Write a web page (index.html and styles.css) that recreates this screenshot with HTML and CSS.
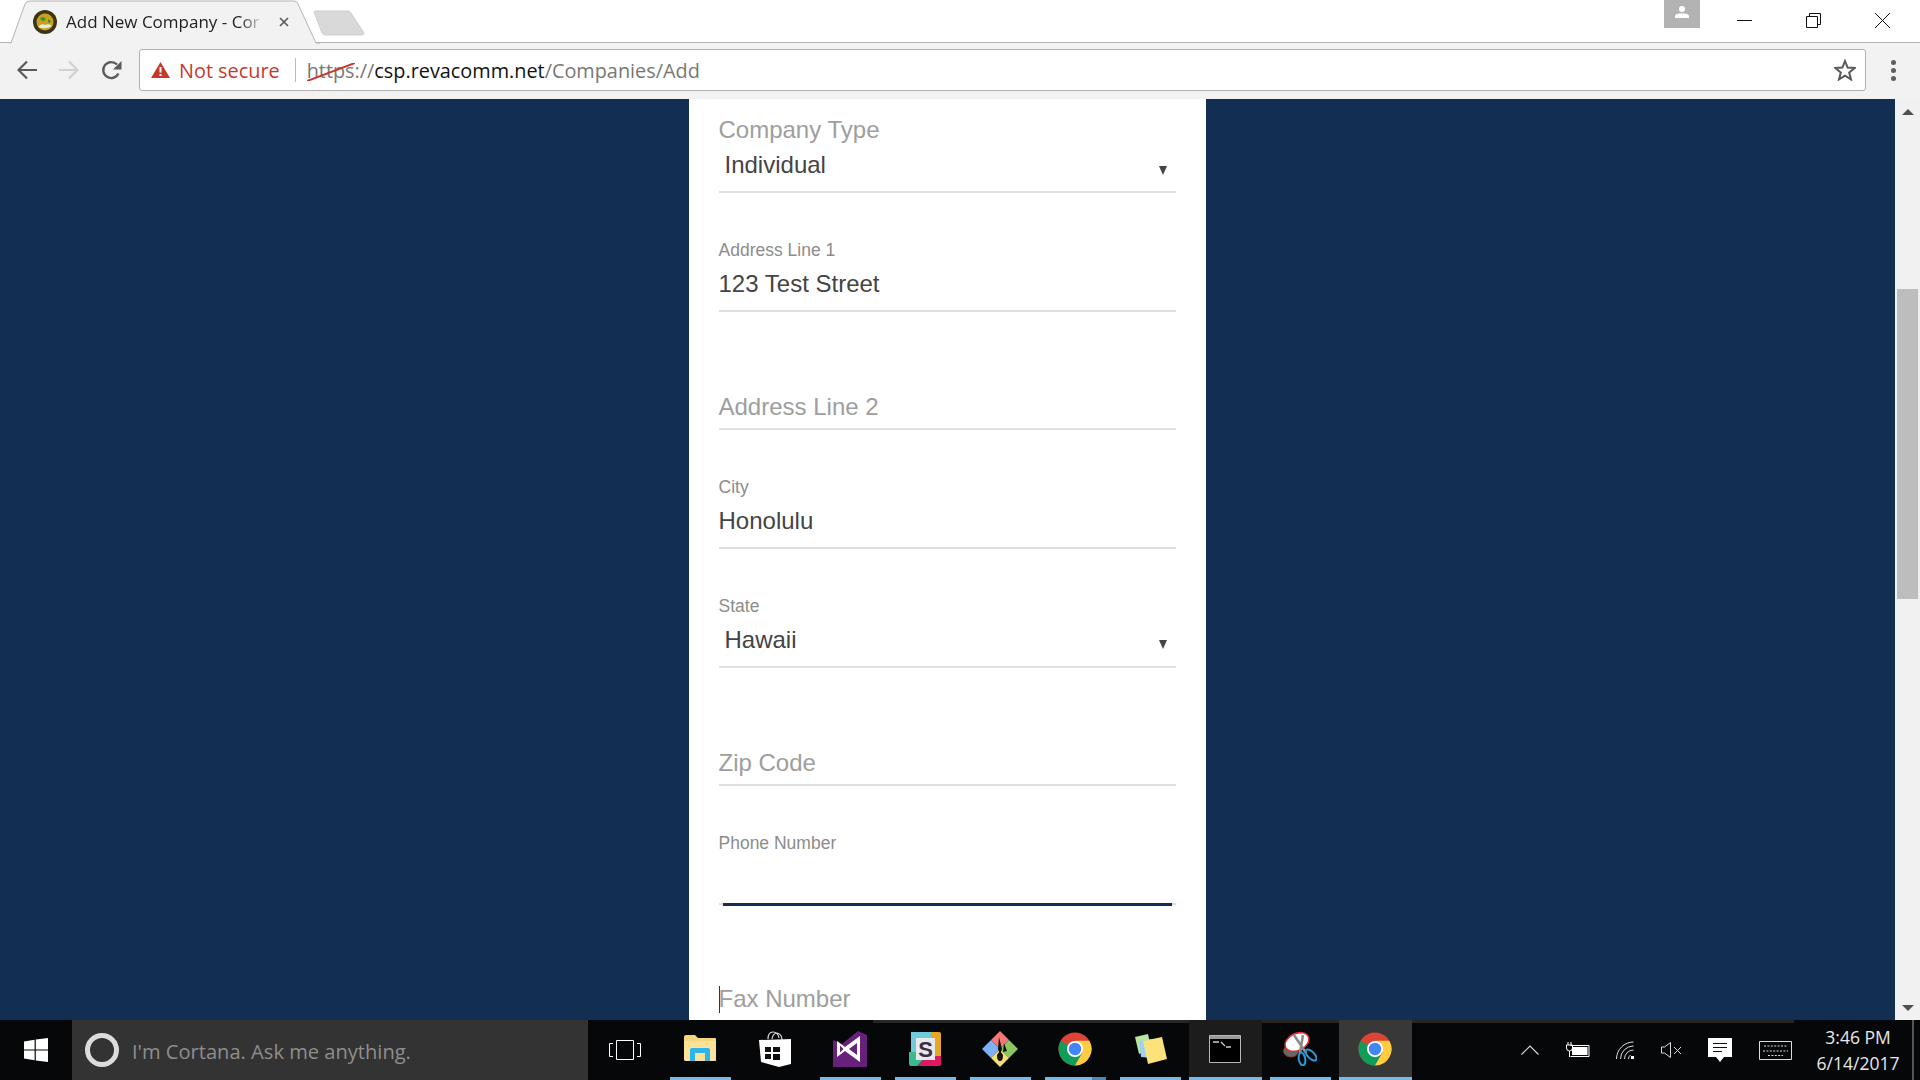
FILE: index.html
```html
<!DOCTYPE html>
<html lang="en">
  <head>
    <meta charset="UTF-8" />
    <title>Add New Company</title>
    <link rel="stylesheet" href="styles.css">
  </head>
  <body>
    <svg class="defs" width="0" height="0">
      <symbol id="chrome" viewBox="0 0 34 34">
        <circle cx="17" cy="17" r="16.5" fill="#db4437" />
        <path d="M2.6 9 A16.5 16.5 0 0 0 17 33.5 L24.5 20.5 H17 L9.5 13z" fill="#0f9d58" />
        <path d="M17 33.5 A16.5 16.5 0 0 0 31.3 8.7 H17 L24.5 20.5z" fill="#ffcd40" />
        <circle cx="17" cy="17" r="8" fill="#fff" />
        <circle cx="17" cy="17" r="6.2" fill="#4285f4" />
      </symbol>
    </svg>

    <!-- Tab strip -->
    <div class="tabstrip">
      <div class="tab">
        <svg class="tab-shape" width="310" height="44" viewBox="0 0 310 44">
          <path d="M0 43 H1 L15 4 Q16 1 20 1 H284 Q287 1 288 4 L306 43 H310" fill="#f2f2f2" stroke="#b4b4b4" />
        </svg>
        <svg class="favicon" width="24" height="24" viewBox="0 0 24 24">
          <circle cx="12" cy="12" r="12" fill="#3d3418" />
          <circle cx="12" cy="12" r="8.5" fill="#c9a21c" />
          <path d="M7 8 L11 7 L13 10 L9 11z M15 9 l3 2 -1 2 -2-1z" fill="#3f8c3a" />
          <path d="M5 17 q3-4 7-2 q4-2 7 1 q-6 4-14 1z" fill="#e8e8e8" />
        </svg>
        <span class="tab-title">Add New Company - Cor</span>
        <svg class="tab-close" width="10" height="10" viewBox="0 0 10 10">
          <path d="M1 1 L9 9 M9 1 L1 9" stroke="#5a5a5a" stroke-width="1.7" />
        </svg>
      </div>
      <svg class="newtab" width="52" height="26" viewBox="0 0 52 26">
        <path d="M1 2 Q1 1 3 1 H35 Q37 1 38 3 L51 23 Q51 25 49 25 H12 Q10 25 9 23z" fill="#d9d9d9" stroke="#cfcfcf" />
      </svg>
      <div class="spacer"></div>
      <div class="profile">
        <svg width="14" height="14" viewBox="0 0 14 14">
          <circle cx="7" cy="4" r="3" fill="#fff" />
          <path d="M0 13 V11 Q0 9 4 8.4 H10 Q14 9 14 11 V13z" fill="#fff" />
        </svg>
      </div>
      <div class="winbtn">
        <svg width="15" height="15" viewBox="0 0 15 15"><path d="M0 7.5 H15" stroke="#111" /></svg>
      </div>
      <div class="winbtn">
        <svg width="15" height="15" viewBox="0 0 15 15">
          <path d="M3.5 3 V.5 H14.5 V11.5 H12 M.5 3.5 H11.5 V14.5 H.5z" fill="none" stroke="#111" />
        </svg>
      </div>
      <div class="winbtn">
        <svg width="15" height="15" viewBox="0 0 15 15"><path d="M0 0 L15 15 M15 0 L0 15" stroke="#111" /></svg>
      </div>
    </div>

    <!-- Toolbar -->
    <div class="toolbar">
      <svg class="navicon" width="20" height="20" viewBox="0 0 20 20">
        <path d="M20 10 H2 M10 1.5 L1.5 10 L10 18.5" fill="none" stroke="#5a5a5a" stroke-width="2.2" />
      </svg>
      <svg class="navicon" width="20" height="20" viewBox="0 0 20 20">
        <path d="M0 10 H18 M10 1.5 L18.5 10 L10 18.5" fill="none" stroke="#d2d2d2" stroke-width="2.2" />
      </svg>
      <svg class="navicon" width="21" height="21" viewBox="0 0 21 21">
        <path d="M17.5 13.5 A8 8 0 1 1 16 4.5" fill="none" stroke="#5a5a5a" stroke-width="2.4" />
        <path d="M20.5 1 V9.5 H12z" fill="#5a5a5a" />
      </svg>
      <div class="omnibox">
        <svg class="warn" width="19" height="16" viewBox="0 0 19 16">
          <path d="M9.5 0 L19 16 H0z" fill="#c5392d" />
          <path d="M8.5 5 H10.5 V10.5 H8.5z M8.5 12 H10.5 V14 H8.5z" fill="#fff" />
        </svg>
        <span class="not-secure">Not secure</span>
        <span class="omni-divider"></span>
        <span class="url">
          <span class="scheme">https<svg class="strike" width="48" height="18" viewBox="0 0 48 18"><path d="M0 18 L48 0" stroke="#c5392d" stroke-width="2" /></svg></span><span class="url-dim">://</span>csp.revacomm.net<span class="url-dim">/Companies/Add</span>
        </span>
        <div class="spacer"></div>
        <svg class="star" width="22" height="22" viewBox="0 0 22 22">
          <path d="M11 2 L13.6 8.6 L20.6 9 L15.2 13.5 L17 20.4 L11 16.6 L5 20.4 L6.8 13.5 L1.4 9 L8.4 8.6z" fill="none" stroke="#5a5a5a" stroke-width="2" />
        </svg>
      </div>
      <div class="menu-dots"><i></i><i></i><i></i></div>
    </div>

    <!-- Page -->
    <div class="viewport">
      <div class="page">
        <form class="card">
          <div class="field field-first">
            <span class="label-big">Company Type</span>
            <div class="value select">Individual<span class="arrow"></span></div>
          </div>
          <div class="field">
            <span class="label">Address Line 1</span>
            <div class="value">123 Test Street</div>
          </div>
          <div class="field">
            <div class="value placeholder">Address Line 2</div>
          </div>
          <div class="field">
            <span class="label">City</span>
            <div class="value">Honolulu</div>
          </div>
          <div class="field">
            <span class="label">State</span>
            <div class="value select">Hawaii<span class="arrow"></span></div>
          </div>
          <div class="field">
            <div class="value placeholder">Zip Code</div>
          </div>
          <div class="field field-focus">
            <span class="label">Phone Number</span>
            <div class="value">&nbsp;</div>
          </div>
          <div class="field">
            <div class="value placeholder fax"><span class="caret"></span>Fax Number</div>
          </div>
        </form>
      </div>
      <div class="scrollbar">
        <div class="scroll-btn"><span class="scroll-up"></span></div>
        <div class="scroll-track"><div class="scroll-thumb"></div></div>
        <div class="scroll-btn"><span class="scroll-down"></span></div>
      </div>
    </div>

    <!-- Taskbar -->
    <div class="taskbar">
      <div class="start">
        <svg width="24" height="24" viewBox="0 0 24 24">
          <path d="M0 3.4 L10.6 1.8 V11.4 H0z M11.8 1.6 L24 0 V11.4 H11.8z M0 12.6 H10.6 V22.2 L0 20.6z M11.8 12.6 H24 V24 L11.8 22.4z" fill="#fff" />
        </svg>
      </div>
      <div class="cortana">
        <span class="cortana-ring"></span>
        <span class="cortana-text">I'm Cortana. Ask me anything.</span>
      </div>
      <div class="taskview">
        <svg width="32" height="20" viewBox="0 0 32 20">
          <path d="M7.5 .5 H24.5 V19.5 H7.5z M4 3.5 H.5 V16.5 H4 M28 3.5 H31.5 V16.5 H28" fill="none" stroke="#fff" />
        </svg>
      </div>
      <div class="tasks">
        <div class="task task-open">
          <svg width="32" height="28" viewBox="0 0 32 28">
            <path d="M0 2 Q0 0 2 0 H11 L14 3 H31 Q32 3 32 4 V25 Q32 26 30 26 H2 Q0 26 0 24z" fill="#f6d67a" />
            <path d="M0 6 H32 V25 Q32 26 30 26 H2 Q0 26 0 24z" fill="#fbe29a" />
            <path d="M6 26 V15 Q6 13 8 13 H24 Q26 13 26 15 V26 H21 V18 H11 V26z" fill="#2fb4e9" />
          </svg>
        </div>
        <div class="task">
          <svg width="32" height="36" viewBox="0 0 32 36">
            <path d="M9 8 Q9 1 14 1 Q19 1 20 7 M13 8 Q14 2 18 2 Q23 3 23 9" fill="none" stroke="#ddd" stroke-width="1.2" />
            <path d="M0 9 L32 8 V33 L20 36 L2 31z" fill="#fff" />
            <path d="M6 16 H12 V21 H6z M14 16 H21 V21 H14z M6 23 H12 V28 H6z M14 23 H21 V29 H14z" fill="#111" />
          </svg>
        </div>
        <div class="task task-open">
          <svg width="34" height="36" viewBox="0 0 34 36">
            <path d="M0 9 L9 13 L25 0 L34 4 V36 H0z" fill="#68217a" />
            <path d="M4 10 L12 16 L27 5 V31 L12 20 L4 26z" fill="#fff" />
            <path d="M7 14.5 L10.5 18 L7 21.5z M16 18 L24 12 V24z" fill="#68217a" />
          </svg>
        </div>
        <div class="task task-open">
          <svg width="32" height="34" viewBox="0 0 32 34">
            <path d="M2 0 H22 V6 H8 V20 H2z" fill="#70cadb" />
            <path d="M22 0 H30 Q32 0 32 2 V24 H26 V6 H22z" fill="#e8a723" />
            <path d="M32 24 V32 Q32 34 30 34 H8 L14 28 H26 V24z" fill="#e01765" />
            <path d="M0 20 H8 V28 H14 L8 34 H2 Q0 34 0 32z" fill="#3eb890" />
            <rect x="7" y="6" width="19" height="22" fill="#e9e9e9" />
            <text class="slack-s" x="16.5" y="25" text-anchor="middle">S</text>
          </svg>
        </div>
        <div class="task task-open">
          <svg width="36" height="36" viewBox="0 0 36 36">
            <path d="M18 0 L27 9 L18 18 L9 9z" fill="#f47a7a" />
            <path d="M9 9 L18 18 L9 27 L0 18z" fill="#7db0f8" />
            <path d="M27 9 L36 18 L27 27 L18 18z" fill="#8cc85f" />
            <path d="M18 18 L27 27 L18 36 L9 27z" fill="#f9dd75" />
            <path d="M17 6 L20 18 L18 24 L16 18z M22 12 L25 20 L21 21z M15 24 Q18 18 21 24 Q21 30 18 30 Q15 30 15 24z" fill="#111" />
          </svg>
        </div>
        <div class="task task-open task-split">
          <svg width="34" height="34"><use href="#chrome" /></svg>
        </div>
        <div class="task task-open">
          <svg width="34" height="30" viewBox="0 0 34 30">
            <path d="M2 3 L15 0 L18 14 L6 20z" fill="#b8e6a0" />
            <path d="M6 7 L20 5 L20 24 L8 23z" fill="#9fd0f5" />
            <path d="M10 7 L29 3 L34 25 L15 30z" fill="#fbe27a" />
          </svg>
        </div>
        <div class="task task-open task-running">
          <svg width="32" height="28" viewBox="0 0 32 28">
            <path d="M.5 .5 H31.5 V27.5 H.5z" fill="#000" stroke="#b8b8b8" />
            <path d="M1 1 H31 V4 H1z" fill="#9a9a9a" />
            <path d="M4 7 H10 M12 7 L16 11 M17 12 H22" stroke="#ccc" stroke-width="1.3" />
          </svg>
        </div>
        <div class="task task-open">
          <svg width="34" height="34" viewBox="0 0 34 34">
            <ellipse cx="8" cy="19" rx="7.5" ry="6" fill="#666" stroke="#8a3a3a" />
            <ellipse cx="14" cy="10" rx="12.5" ry="8.5" transform="rotate(-25 14 10)" fill="#fff" stroke="#d33" stroke-width="1.5" />
            <path d="M11 3 L23 21 M20 3 L17 21" stroke="#8c8c8c" stroke-width="2.6" />
            <ellipse cx="19" cy="27" rx="3.2" ry="6.5" transform="rotate(-10 19 27)" fill="none" stroke="#2c9ad6" stroke-width="2" />
            <ellipse cx="28" cy="23" rx="3.4" ry="7" transform="rotate(-45 28 23)" fill="none" stroke="#2c9ad6" stroke-width="2" />
          </svg>
        </div>
        <div class="task task-open task-active">
          <svg width="34" height="34"><use href="#chrome" /></svg>
        </div>
      </div>
      <div class="spacer"></div>
      <div class="tray">
        <svg width="18" height="10" viewBox="0 0 18 10"><path d="M.5 9.5 L9 1 L17.5 9.5" fill="none" stroke="#ddd" stroke-width="1.1" /></svg>
        <svg width="24" height="16" viewBox="0 0 24 16">
          <path d="M4.5 3.5 H23 V14.5 H4.5" fill="none" stroke="#fff" />
          <path d="M6 5 H21.5 V13 H6z" fill="#fff" />
          <path d="M2 0 V3 M5 0 V3 M.5 3 H6.5 V6 Q6.5 9 3.5 9 Q.5 9 .5 6z M3.5 9 V15" fill="none" stroke="#fff" />
        </svg>
        <svg width="18" height="18" viewBox="0 0 18 18">
          <path d="M.5 18 A17 17 0 0 1 17.5 1 M4.5 18 A13 13 0 0 1 17.5 5 M8.5 18 A9 9 0 0 1 17.5 9 M12.5 18 A5 5 0 0 1 14.5 14" fill="none" stroke="#ddd" />
          <rect x="15" y="15" width="3" height="3" fill="#fff" />
        </svg>
        <svg width="21" height="16" viewBox="0 0 21 16">
          <path d="M.5 5 H3.5 L9.5 .5 V15.5 L3.5 11 H.5z" fill="none" stroke="#ddd" />
          <path d="M13 5 L20 12 M20 5 L13 12" stroke="#ddd" />
        </svg>
        <svg width="24" height="24" viewBox="0 0 24 24">
          <path d="M0 0 H24 V19 H16 L12 24 L8 19 H0z" fill="#fff" />
          <path d="M5 5.5 H19 M5 9.5 H19 M5 13.5 H14" stroke="#111" />
        </svg>
        <svg width="33" height="19" viewBox="0 0 33 19">
          <path d="M.5 .5 H32.5 V18.5 H.5z" fill="none" stroke="#ddd" />
          <path d="M5 5 H28 M4 10 H29 M9 14.5 H24" stroke="#ddd" stroke-dasharray="2 1.4" />
        </svg>
      </div>
      <div class="clock">
        <span>3:46 PM</span>
        <span>6/14/2017</span>
      </div>
      <div class="show-desktop"></div>
    </div>
  </body>
</html>
```
FILE: styles.css
```css
* {
  box-sizing: border-box;
}
html,
body {
  height: 100%;
  margin: 0;
}
body {
  display: flex;
  flex-direction: column;
  width: 1920px;
  height: 1080px;
  overflow: hidden;
  font-family: "Liberation Sans", Arial, sans-serif;
  background-color: #122e52;
}
.defs {
  position: absolute;
}
.spacer {
  flex: 1;
}

/* Tab strip */
.tabstrip {
  display: flex;
  align-items: flex-start;
  height: 43px;
  padding: 0 3px 0 10px;
  background-color: #fff;
  border-bottom: 1px solid #b4b4b4;
}
.tab {
  position: relative;
  display: flex;
  align-items: center;
  width: 308px;
  height: 43px;
  padding: 0 0 0 23px;
}
.tab-shape {
  position: absolute;
  left: 0;
  top: 0;
}
.favicon,
.tab-title,
.tab-close {
  position: relative;
}
.tab-title {
  width: 198px;
  margin-left: 9px;
  white-space: nowrap;
  font-family: "Open Sans", sans-serif;
  font-size: 17px;
  color: #222;
  -webkit-mask-image: linear-gradient(to right, #000 88%, transparent 100%);
  mask-image: linear-gradient(to right, #000 88%, transparent 100%);
}
.tab-close {
  margin-left: 15px;
}
.newtab {
  margin: 10px 0 0 -5px;
}
.profile {
  display: flex;
  align-items: center;
  justify-content: center;
  width: 36px;
  height: 28px;
  padding-bottom: 4px;
  background-color: #b3b3b3;
}
.winbtn {
  display: flex;
  justify-content: center;
  width: 70px;
  padding-top: 13px;
}
.winbtn svg {
  display: block;
}
.profile + .winbtn {
  margin-left: 9px;
}
.winbtn + .winbtn {
  margin-left: -1px;
}

/* Toolbar */
.toolbar {
  display: flex;
  align-items: center;
  height: 56px;
  padding: 0 0 2px 17px;
  background-color: #f2f2f2;
}
.navicon {
  flex: none;
  margin-right: 22px;
}
.navicon + .navicon + .navicon {
  margin-right: 17px;
}
.omnibox {
  display: flex;
  flex: none;
  align-items: center;
  width: 1727px;
  height: 42px;
  padding: 0 9px 0 11px;
  background-color: #fff;
  border: 1px solid #b0b0b0;
  border-radius: 3px;
  font-family: "Open Sans", sans-serif;
  font-size: 19.85px;
  white-space: nowrap;
}
.not-secure {
  margin-left: 9px;
  color: #c5392d;
}
.omni-divider {
  width: 1px;
  height: 24px;
  margin: 0 11px 0 15px;
  background-color: #bbb;
}
.url {
  color: #111;
}
.url-dim {
  color: #777;
}
.scheme {
  position: relative;
  color: #777;
}
.strike {
  position: absolute;
  left: 0;
  top: 6px;
}
.menu-dots {
  display: flex;
  flex: none;
  flex-direction: column;
  align-items: center;
  gap: 3px;
  width: 54px;
}
.menu-dots i {
  width: 5px;
  height: 5px;
  border-radius: 50%;
  background-color: #5f5f5f;
}

/* Page */
.viewport {
  display: flex;
  flex: 1;
  min-height: 0;
}
.page {
  flex: 1;
  display: flex;
  justify-content: center;
  min-width: 0;
  padding-right: 1px;
}
.card {
  width: 517px;
  height: 100%;
  padding: 0 30px;
  overflow: hidden;
  background-color: #fff;
}
.field {
  display: flex;
  flex-direction: column;
  justify-content: flex-end;
  height: 118.67px;
  border-bottom: 2px solid #e0e0e0;
}
.field-first {
  height: 94px;
}
.field-focus {
  position: relative;
}
.field-focus::after {
  content: "";
  position: absolute;
  left: 4px;
  right: 4px;
  bottom: -3px;
  height: 3px;
  background-color: #122e52;
}
.label {
  margin-bottom: 10px;
  font-size: 17.5px;
  line-height: 20px;
  color: #8c8c8c;
}
.label-big {
  margin-bottom: 7px;
  font-size: 24px;
  line-height: 28px;
  color: #9e9e9e;
}
.value {
  padding-bottom: 12px;
  font-size: 24px;
  line-height: 28px;
  color: #444;
}
.select {
  display: flex;
  justify-content: space-between;
  align-items: center;
  padding-left: 6px;
  padding-right: 9px;
}
.arrow {
  width: 0;
  height: 0;
  margin-top: 10px;
  border-left: 4.5px solid transparent;
  border-right: 4.5px solid transparent;
  border-top: 9px solid #444;
}
.placeholder {
  padding-bottom: 7px;
  color: #9e9e9e;
}
.fax {
  padding-bottom: 9px;
}
.caret {
  display: inline-block;
  width: 1px;
  height: 27px;
  margin-right: -1px;
  vertical-align: -6px;
  background-color: #333;
}

/* Scrollbar */
.scrollbar {
  display: flex;
  flex-direction: column;
  width: 25px;
  background-color: #f1f1f1;
}
.scroll-btn {
  display: flex;
  align-items: center;
  justify-content: center;
  height: 25px;
}
.scroll-up,
.scroll-down {
  width: 0;
  height: 0;
  border-left: 6px solid transparent;
  border-right: 6px solid transparent;
}
.scroll-up {
  border-bottom: 6px solid #505050;
}
.scroll-down {
  border-top: 6px solid #505050;
}
.scroll-track {
  flex: 1;
  padding: 165px 2px 0;
}
.scroll-thumb {
  height: 310px;
  background-color: #bdbdbd;
}

/* Taskbar */
.taskbar {
  position: relative;
  display: flex;
  align-items: stretch;
  height: 60px;
  background-color: #060708;
  color: #fff;
}
.taskbar::before {
  content: "";
  position: absolute;
  left: 873px;
  right: 126px;
  top: 0;
  height: 3px;
  background-color: #262626;
}
.start {
  display: flex;
  align-items: center;
  justify-content: center;
  width: 72px;
}
.cortana {
  display: flex;
  align-items: center;
  width: 516px;
  padding-left: 13px;
  background-color: #333;
}
.cortana-ring {
  width: 34px;
  height: 34px;
  border: 5px solid #dcdcdc;
  border-radius: 50%;
}
.cortana-text {
  margin: 2px 0 0 13px;
  font-family: "Open Sans", sans-serif;
  font-size: 20.1px;
  color: #8e8e8e;
}
.taskview {
  display: flex;
  align-items: center;
  justify-content: center;
  width: 74px;
}
.tasks {
  position: relative;
  display: flex;
}
.task {
  position: relative;
  display: flex;
  align-items: center;
  justify-content: center;
  width: 75px;
  padding: 0 2px 2px 0;
  border-left: 2px solid transparent;
  background-clip: padding-box;
}
.task-open::after {
  content: "";
  position: absolute;
  left: 6px;
  right: 6px;
  bottom: 0;
  height: 3px;
  background-color: #76b9ed;
}
.task-split::after {
  background: linear-gradient(to right, #76b9ed 47px, #4f87b5 47px);
}
.task-running {
  background-color: #1c1c1c;
}
.task-active {
  background-color: #383838;
}
.task-running::after,
.task-active::after {
  left: 0;
  right: 0;
}
.slack-s {
  font-family: "Liberation Sans", sans-serif;
  font-size: 22px;
  font-weight: bold;
  fill: #3e2d4a;
}
.tray {
  display: flex;
  align-items: center;
  gap: 26.6px;
  padding-right: 18px;
}
.clock {
  display: flex;
  flex-direction: column;
  align-items: center;
  justify-content: center;
  gap: 4px;
  width: 96px;
  margin-right: 6px;
  font-family: "Open Sans", sans-serif;
  font-size: 17.5px;
  line-height: 22px;
  color: #e8e8e8;
}
.show-desktop {
  width: 2px;
  margin-right: 6px;
  background-color: #555;
}
```
